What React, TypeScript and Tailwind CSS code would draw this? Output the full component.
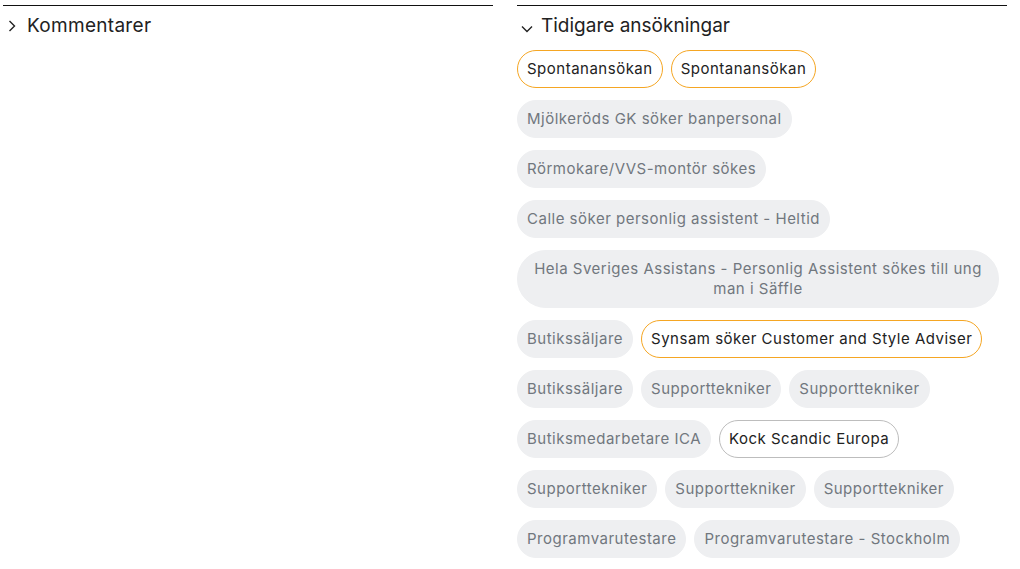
type Chip = { label: string; kind: "grey" | "orange" | "white" };

const chips: Chip[] = [
  { label: "Spontanansökan", kind: "orange" },
  { label: "Spontanansökan", kind: "orange" },
  { label: "Mjölkeröds GK söker banpersonal", kind: "grey" },
  { label: "Rörmokare/VVS-montör sökes", kind: "grey" },
  { label: "Calle söker personlig assistent - Heltid", kind: "grey" },
  { label: "Hela Sveriges Assistans - Personlig Assistent sökes till ung man i Säffle", kind: "grey" },
  { label: "Butikssäljare", kind: "grey" },
  { label: "Synsam söker Customer and Style Adviser", kind: "orange" },
  { label: "Butikssäljare", kind: "grey" },
  { label: "Supporttekniker", kind: "grey" },
  { label: "Supporttekniker", kind: "grey" },
  { label: "Butiksmedarbetare ICA", kind: "grey" },
  { label: "Kock Scandic Europa", kind: "white" },
  { label: "Supporttekniker", kind: "grey" },
  { label: "Supporttekniker", kind: "grey" },
  { label: "Supporttekniker", kind: "grey" },
  { label: "Programvarutestare", kind: "grey" },
  { label: "Programvarutestare - Stockholm", kind: "grey" },
];

const chipStyles = {
  grey: "bg-[#eeeff1] border-[#eeeff1] text-[#71777e]",
  orange: "bg-white border-[#f5a623] text-[#222]",
  white: "bg-white border-[#bdbdbd] text-[#222]",
};

const ApplicationChip = ({ chip }: { chip: Chip }) => (
  <button
    className={`mr-2 mb-3 rounded-full border px-[9px] py-[8px] text-center text-[15px] leading-5 tracking-[0.5px] ${chipStyles[chip.kind]}`}
  >
    {chip.label}
  </button>
);

const Chevron = ({ open }: { open?: boolean }) =>
  open ? (
    <svg width="12" height="8" viewBox="0 0 12 8" className="mt-[6px]">
      <polyline points="1,1.5 6,6.5 11,1.5" fill="none" stroke="#222" strokeWidth="1.4" />
    </svg>
  ) : (
    <svg width="8" height="12" viewBox="0 0 8 12">
      <polyline points="1.5,1 6.5,6 1.5,11" fill="none" stroke="#222" strokeWidth="1.4" />
    </svg>
  );

export default function App() {
  return (
    <div
      className="flex gap-6 pl-[3px] pt-[5px] bg-white"
      style={{ fontFamily: "Inter, 'Noto Sans', sans-serif" }}
    >
      <section className="w-[490px] border-t border-[#111]">
        <div className="flex items-center gap-[11px] pl-[5px] pt-[9px] text-[19px] leading-[22px] tracking-[0.3px] text-[#222]">
          <Chevron />
          <span>Kommentarer</span>
        </div>
      </section>
      <section className="w-[490px] border-t border-[#111]">
        <div className="flex items-center gap-[8px] pl-[4px] pt-[9px] text-[19px] leading-[22px] text-[#222]">
          <Chevron open />
          <span>Tidigare ansökningar</span>
        </div>
        <div className="mt-[13px] flex flex-wrap">
          {chips.map((c, i) => (
            <ApplicationChip key={i} chip={c} />
          ))}
        </div>
      </section>
    </div>
  );
}
